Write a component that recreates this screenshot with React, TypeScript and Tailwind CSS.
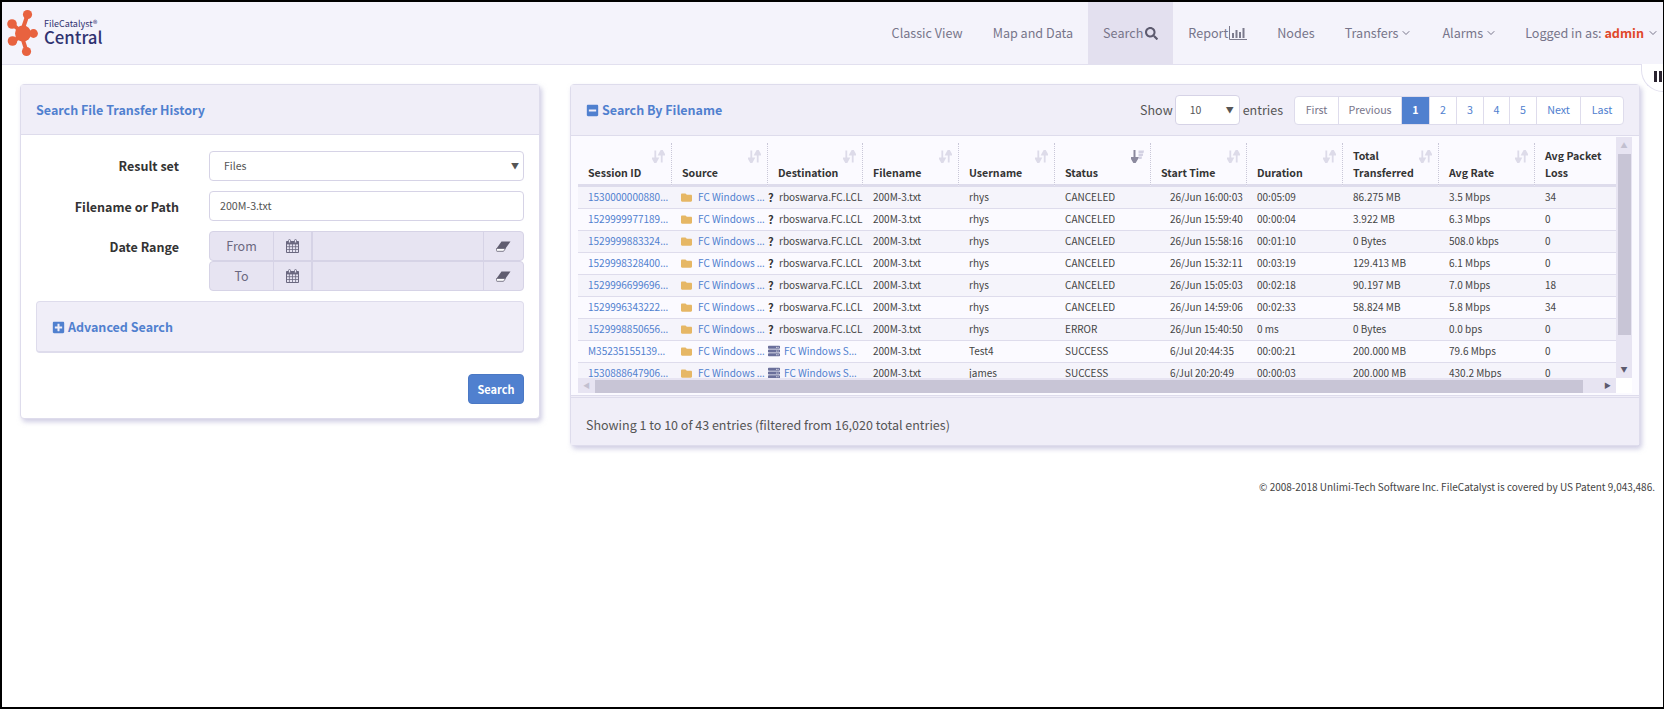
import React from "react";
import { FaSearch, FaFolder, FaServer, FaPlusSquare, FaMinusSquare } from "react-icons/fa";
import { ChevronDown } from "lucide-react";

const rows = [
  ["1530000000880", 0, "rboswarva.FC.LCL", "rhys", "CANCELED", "26/Jun 16:00:03", "00:05:09", "86.275 MB", "3.5 Mbps", "34"],
  ["1529999977189", 0, "rboswarva.FC.LCL", "rhys", "CANCELED", "26/Jun 15:59:40", "00:00:04", "3.922 MB", "6.3 Mbps", "0"],
  ["1529999883324", 0, "rboswarva.FC.LCL", "rhys", "CANCELED", "26/Jun 15:58:16", "00:01:10", "0 Bytes", "508.0 kbps", "0"],
  ["1529998328400", 0, "rboswarva.FC.LCL", "rhys", "CANCELED", "26/Jun 15:32:11", "00:03:19", "129.413 MB", "6.1 Mbps", "0"],
  ["1529996699696", 0, "rboswarva.FC.LCL", "rhys", "CANCELED", "26/Jun 15:05:03", "00:02:18", "90.197 MB", "7.0 Mbps", "18"],
  ["1529996343222", 0, "rboswarva.FC.LCL", "rhys", "CANCELED", "26/Jun 14:59:06", "00:02:33", "58.824 MB", "5.8 Mbps", "34"],
  ["1529998850656", 0, "rboswarva.FC.LCL", "rhys", "ERROR", "26/Jun 15:40:50", "0 ms", "0 Bytes", "0.0 bps", "0"],
  ["M35235155139", 1, "FC Windows S", "Test4", "SUCCESS", "6/Jul 20:44:35", "00:00:21", "200.000 MB", "79.6 Mbps", "0"],
  ["1530888647906", 1, "FC Windows S", "james", "SUCCESS", "6/Jul 20:20:49", "00:00:03", "200.000 MB", "430.2 Mbps", "0"],
] as const;

const heads: [string, string?][] = [
  ["Session ID"], ["Source"], ["Destination"], ["Filename"], ["Username"], ["Status"], ["Start Time"], ["Duration"],
  ["Total", "Transferred"], ["Avg Rate"], ["Avg Packet", "Loss"],
];

function Ell() {
  return <span className="[font-family:'Noto_Sans',sans-serif]">…</span>;
}

function Logo() {
  return (
    <svg width="38" height="48" viewBox="0 0 38 48" className="shrink-0">
      <g fill="#e8623f" stroke="#e8623f">
        <path d="M20.5 6 L15 22 M5 15 L16 24 M5.5 32 L16 27 M19.5 42 L15 28 M17 24.5 H28" strokeWidth="4" fill="none" />
        <circle cx="16" cy="24.5" r="8" stroke="none" />
        <circle cx="20.5" cy="5.5" r="4.6" stroke="none" />
        <circle cx="5" cy="15" r="4.8" stroke="none" />
        <circle cx="5.5" cy="32" r="4.8" stroke="none" />
        <circle cx="19.5" cy="42.5" r="4.6" stroke="none" />
        <circle cx="26.5" cy="24.5" r="4.4" stroke="none" />
      </g>
    </svg>
  );
}

function SortIcon({ active }: { active?: boolean }) {
  if (active) {
    return (
      <svg width="13" height="13" viewBox="0 0 13 13" className="absolute right-[6px] top-[7px]">
        <path d="M3.5 0 V10 M0.5 8 L3.5 13 L6.5 8 Z" stroke="#8b899e" strokeWidth="2" fill="#8b899e" />
        <path d="M7.5 0.5 H13 L12.5 3 H7.5 Z M7.5 3.6 H12.2 L11.8 6 H7.5 Z M7.5 6.6 H11 L10.6 9 H7.5 Z" fill="#d3d1e3" />
      </svg>
    );
  }
  return (
    <svg width="13" height="13" viewBox="0 0 13 13" className="absolute right-[6px] top-[7px]">
      <path d="M3.3 0.5 V10 M0.8 8.5 L3.3 13 L5.8 8.5 Z" stroke="#dddbe9" strokeWidth="1.8" fill="#dddbe9" />
      <path d="M9.7 12.5 V3 M7.2 4.5 L9.7 0 L12.2 4.5 Z" stroke="#dddbe9" strokeWidth="1.8" fill="#dddbe9" />
    </svg>
  );
}

function CalendarIcon() {
  return (
    <svg width="13" height="14" viewBox="0 0 13 14">
      <path d="M0.5 2.5 H12.5 V13.5 H0.5 Z" fill="none" stroke="#6b6880" />
      <path d="M0.5 5 H12.5 M0.5 7.7 H12.5 M0.5 10.5 H12.5 M3.4 5 V13.5 M6.5 5 V13.5 M9.6 5 V13.5" stroke="#6b6880" strokeWidth="0.8" />
      <rect x="0.5" y="2.5" width="12" height="2.5" fill="#6b6880" />
      <rect x="2.5" y="0.5" width="2" height="3.5" rx="1" fill="#e7e4f2" stroke="#6b6880" strokeWidth="0.8" />
      <rect x="8.5" y="0.5" width="2" height="3.5" rx="1" fill="#e7e4f2" stroke="#6b6880" strokeWidth="0.8" />
    </svg>
  );
}

function EraserIcon() {
  return (
    <svg width="15" height="11" viewBox="0 0 15 11">
      <path d="M5.5 0.5 H14.5 L9.5 7.5 H0.5 Z" fill="#605d70" />
      <path d="M0.5 7.5 H9.5 L7.5 10.3 H1 Q-0.3 10.3 0.5 7.5 Z" fill="#fff" stroke="#605d70" strokeWidth="0.8" />
    </svg>
  );
}

function BarsIcon() {
  return (
    <svg width="18" height="14" viewBox="0 0 18 14" className="ml-px">
      <path d="M0.5 0 V13.5 H18" stroke="#7b7a8c" fill="none" />
      <path d="M3 7 H5 V12 H3 Z M6.5 4 H8.5 V12 H6.5 Z M10 6 H12 V12 H10 Z M13.5 2 H15.5 V12 H13.5 Z" fill="#7b7a8c" />
    </svg>
  );
}

function DateRow({ label }: { label: string }) {
  return (
    <div className="flex h-[30px] rounded border border-[#d6d3e6] bg-[#e7e4f2] text-[#6b6880]">
      <div className="flex w-[64px] items-center justify-center border-r border-[#d6d3e6] text-[12.5px]">{label}</div>
      <div className="flex w-[39px] items-center justify-center border-r-2 border-[#d6d3e6]"><CalendarIcon /></div>
      <div className="flex-1 border-r border-[#d6d3e6]" />
      <div className="flex w-[39px] items-center justify-center"><EraserIcon /></div>
    </div>
  );
}

function Pager() {
  const items = [["First", 44], ["Previous", 63], ["1", 28], ["2", 27], ["3", 27], ["4", 26], ["5", 27], ["Next", 44], ["Last", 42]] as const;
  return (
    <div className="flex h-[29px] overflow-hidden rounded border border-[#dedcec] bg-white text-[10.7px]">
      {items.map(([t, w], i) => (
        <div
          key={t}
          style={{ width: w }}
          className={
            "flex items-center justify-center border-r border-[#dedcec] last:border-r-0 " +
            (t === "1" ? "bg-[#5080cf] font-bold text-white" : i < 2 ? "text-[#77758a]" : "text-[#5080cf]")
          }
        >
          {t}
        </div>
      ))}
    </div>
  );
}

export default function App() {
  return (
    <div className="relative box-border h-[709px] w-[1664px] overflow-hidden border-2 border-r-[1.5px] border-black bg-white text-[#444] [font-family:'Noto_Sans_CJK_SC','Noto_Sans',sans-serif]">
      <header className="flex h-[63px] items-stretch justify-between border-b border-[#e2e0ef] bg-[#f4f3fb]">
        <div className="flex items-center pl-[5px]">
          <Logo />
          <div className="ml-[-1px] flex flex-col text-[#2f3270]">
            <span className="text-[9px] leading-[9px]">FileCatalyst®</span>
            <span className="text-[16.8px] font-medium leading-[19px]">Central</span>
          </div>
        </div>
        <nav className="flex items-stretch pr-[4px] text-[12.6px] text-[#77758a]">
          <a className="flex items-center px-[15px]">Classic View</a>
          <a className="flex items-center px-[15px]">Map and Data</a>
          <a className="flex items-center gap-[2px] bg-[#e3e0ef] px-[15px]">Search <FaSearch className="text-[13px] text-[#5c5a6e]" /></a>
          <a className="flex items-center px-[15px]">Report<BarsIcon /></a>
          <a className="flex items-center px-[15px]">Nodes</a>
          <a className="flex items-center gap-[2px] px-[15px]">Transfers <ChevronDown size={12} /></a>
          <a className="flex items-center gap-[2px] px-[15px]">Alarms <ChevronDown size={12} /></a>
          <a className="flex items-center gap-[3px] pl-[13px]">
            <span>Logged in as: <b className="text-[#e0482a]">admin</b></span> <ChevronDown size={12} />
          </a>
        </nav>
      </header>

      <div className="absolute right-0 top-[62px] flex h-[28px] w-[22px] items-start overflow-hidden rounded-bl-[22px] border-b border-l border-[#e2e0ef] bg-white pl-[12px] pt-[7px]">
        <div className="flex shrink-0 gap-[2px]">
          <span className="h-[11px] w-[3px] bg-[#2b2430]" />
          <span className="h-[11px] w-[3px] bg-[#2b2430]" />
        </div>
      </div>

      <main className="flex items-start gap-[30px] pl-[18px] pt-[19px]">
        <section className="box-border w-[520px] rounded border border-[#dedcec] bg-white shadow-[2px_3px_5px_rgba(170,165,205,0.55)]">
          <div className="flex h-[50px] items-center border-b border-[#dedcec] bg-[#f0eef8] pl-[15px] pt-px text-[12.5px] font-semibold text-[#5080cf]">
            Search File Transfer History
          </div>
          <div className="px-[15px] pt-[16px] pb-[14px]">
            <div className="flex h-[30px] items-center">
              <label className="w-[143px] pt-px text-right text-[12.5px] font-semibold text-[#333]">Result set</label>
              <div className="ml-[30px] flex h-[30px] flex-1 items-center justify-between rounded border border-[#d6d3e6] pl-[14px] pr-[4px] text-[10.5px] text-[#555]">
                <span>Files</span><span className="text-[8px] text-[#555]">▼</span>
              </div>
            </div>
            <div className="mt-[10px] flex h-[30px] items-center">
              <label className="w-[143px] pt-[2px] text-right text-[12.5px] font-semibold text-[#333]">Filename or Path</label>
              <div className="ml-[30px] flex h-[30px] flex-1 items-center rounded border border-[#d6d3e6] pl-[10px] pt-px text-[10.7px] text-[#555]">200M-3.txt</div>
            </div>
            <div className="mt-[10px] flex items-start">
              <label className="flex h-[30px] w-[143px] items-center justify-end pt-[2px] text-[12.5px] font-semibold text-[#333]">Date Range</label>
              <div className="ml-[30px] flex-1">
                <DateRow label="From" />
                <DateRow label="To" />
              </div>
            </div>
            <div className="mt-[10px] flex h-[52px] items-center rounded border-x border-t border-b-2 border-[#dedcec] bg-[#f0eef8] pl-[15px] pt-px text-[12.5px] font-semibold text-[#5080cf]">
              <FaPlusSquare className="mr-[3px] text-[13px]" /> Advanced Search
            </div>
            <div className="mt-[21px] flex justify-end">
              <button className="h-[30px] w-[56px] rounded border border-[#4a78c4] bg-[#5080cf] text-[11px] font-semibold text-white">Search</button>
            </div>
          </div>
        </section>

        <section className="box-border w-[1070px] rounded border border-[#dedcec] bg-[#fbfaff] shadow-[2px_3px_5px_rgba(170,165,205,0.55)]">
          <div className="flex h-[51px] items-center justify-between border-b border-[#dedcec] bg-[#f0eef8] pl-[15px] pr-[15px]">
            <div className="flex items-center text-[12.5px] font-semibold text-[#5080cf]">
              <FaMinusSquare className="mr-[3px] text-[13px]" /> Search By Filename
            </div>
            <div className="flex items-center">
              <span className="text-[12.5px] text-[#555]">Show</span>
              <div className="ml-[2px] flex h-[30px] w-[65px] items-center justify-between rounded border border-[#d6d3e6] bg-white pl-[14px] pr-[5px] text-[10.5px] text-[#555]">
                <span>10</span><span className="text-[8px]">▼</span>
              </div>
              <span className="ml-[3px] mr-[11px] text-[12.5px] text-[#555]">entries</span>
              <Pager />
            </div>
          </div>
          <div className="flex pl-[7px] pr-[7px] pt-px">
            <div className="min-w-0 flex-1">
              <div className="flex">
                <div className="h-[241px] w-[1038px] overflow-hidden pt-[6px]">
                  <table className="w-[1100px] table-fixed border-separate border-spacing-0 text-[10px]">
                    <colgroup>
                      <col className="w-[94px]" /><col className="w-[96px]" /><col className="w-[95px]" /><col className="w-[96px]" /><col className="w-[96px]" /><col className="w-[96px]" /><col className="w-[96px]" /><col className="w-[96px]" /><col className="w-[96px]" /><col className="w-[96px]" /><col className="w-[143px]" />
                    </colgroup>
                    <thead>
                      <tr>
                        {heads.map(([a, b], i) => (
                          <th key={a} className="relative h-[44px] border-b-[3px] border-r border-b-[#dedcec] border-r-[#c9c7d8] [border-right-style:dotted] px-[10px] pb-[3px] text-left align-bottom text-[10.6px] font-bold leading-[17px] text-[#333] last:border-r-0">
                            <SortIcon active={i === 5} />
                            {a}{b && <br />}{b}
                          </th>
                        ))}
                      </tr>
                    </thead>
                    <tbody>
                      {rows.map((r, i) => (
                        <tr key={r[0]} className={i % 2 === 0 ? "bg-[#f5f4fb]" : "bg-[#fbfaff]"}>
                          <Td><span className="text-[#5080cf]">{r[0]}<Ell /></span></Td>
                          <Td>
                            <span className="flex items-center text-[#5080cf]">
                              <FaFolder className="ml-[-1px] mr-[6px] shrink-0 text-[11px] text-[#e6b765]" />
                              <span className="whitespace-nowrap">FC Windows <Ell /></span>
                            </span>
                          </Td>
                          <td className="h-[22px] whitespace-nowrap border-b border-[#dedcec] pb-px pl-0 leading-[20px]">
                            <span className="flex items-center">
                              {r[1] ? (
                                <>
                                  <FaServer className="mr-[4px] shrink-0 text-[12px] text-[#6a6f9b]" />
                                  <span className="text-[#5080cf]">{r[2]}<Ell /></span>
                                </>
                              ) : (
                                <>
                                  <b className="mr-[4px] w-[7px] text-[11px] text-[#333]">?</b>
                                  <span>{r[2]}</span>
                                </>
                              )}
                            </span>
                          </td>
                          <Td>200M-3.txt</Td>
                          <Td>{r[3]}</Td>
                          <Td>{r[4]}</Td>
                          <Td className="pl-[19px]">{r[5]}</Td>
                          <Td>{r[6]}</Td>
                          <Td>{r[7]}</Td>
                          <Td>{r[8]}</Td>
                          <Td>{r[9]}</Td>
                        </tr>
                      ))}
                    </tbody>
                  </table>
                </div>
                <div className="flex h-[241px] w-[16px] flex-col items-center bg-[#e7e4f2]">
                  <div className="flex h-[17px] items-center text-[7px] text-[#c2c0d0]">▲</div>
                  <div className="h-[181px] w-[13px] bg-[#c8c5d6]" />
                  <div className="mt-auto flex h-[17px] items-center text-[7px] text-[#5c5a6e]">▼</div>
                </div>
              </div>
              <div className="flex h-[15px]">
                <div className="flex w-[1038px] items-center bg-[#e7e4f2]">
                  <div className="flex w-[17px] items-center justify-center text-[7px] text-[#c2c0d0]">◀</div>
                  <div className="h-[13px] w-[988px] self-end bg-[#c8c5d6]" />
                  <div className="ml-auto flex w-[17px] items-center justify-center text-[7px] text-[#5c5a6e]">▶</div>
                </div>
                <div className="w-[16px] bg-white" />
              </div>
            </div>
          </div>
          <div className="mt-[2px] flex h-[50px] items-center border-t-[3px] border-double border-[#dedcec] bg-[#f0eef8] pl-[15px] pt-[7px] text-[12.5px] text-[#555]">
            Showing 1 to 10 of 43 entries (filtered from 16,020 total entries)
          </div>
        </section>
      </main>

      <footer className="pr-[8px] pt-[33px] text-right text-[10px] text-[#444]">
        © 2008-2018 Unlimi-Tech Software Inc. FileCatalyst is covered by US Patent 9,043,486.
      </footer>
    </div>
  );
}

function Td({ children, className = "" }: { children: React.ReactNode; className?: string }) {
  return (
    <td className={"h-[22px] overflow-hidden whitespace-nowrap border-b border-[#dedcec] pb-px pl-[10px] leading-[20px] " + className}>{children}</td>
  );
}
